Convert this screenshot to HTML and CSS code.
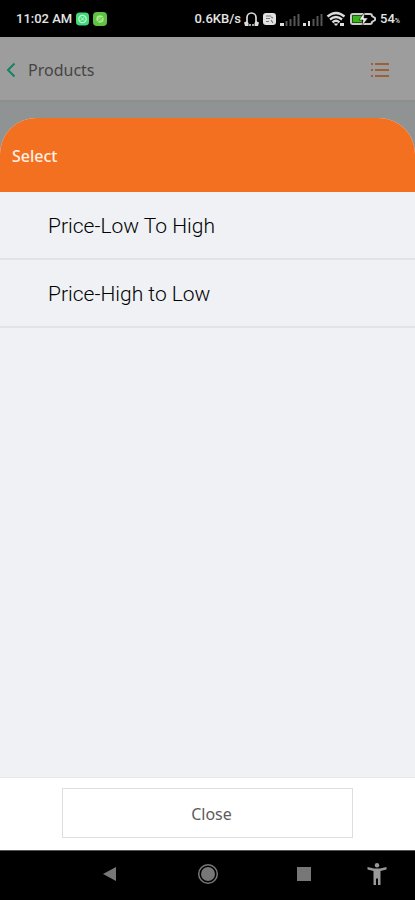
FILE: index.html
```html
<!DOCTYPE html>
<html lang="en">
<head>
<meta charset="utf-8">
<meta name="viewport" content="width=device-width, initial-scale=1">
<title>Products</title>
<link rel="stylesheet" href="styles.css">
</head>
<body>
<div class="status">
  <div class="status-group status-left">
    <span class="clock">11:02 AM</span>
    <svg width="13" height="14" viewBox="0 0 14 14"><rect width="14" height="14" rx="4" fill="#43d878"/><circle cx="7" cy="7" r="4" fill="none" stroke="#c4ffd6" stroke-width="1.3"/><path d="M5 5l4 4M9 5l-4 4" stroke="#c4ffd6"/></svg>
    <svg width="14" height="14" viewBox="0 0 14 14"><rect width="14" height="14" rx="4" fill="#5fc244"/><rect x="4" y="4" width="6" height="6" rx="2" fill="#8fdc70" stroke="#c3f3a8"/><path d="M4 10l6-5" stroke="#5fc244"/></svg>
  </div>
  <div class="status-group status-right">
    <span class="speed">0.6KB/s</span>
    <svg width="15" height="16" viewBox="0 0 15 16"><path d="M3 11.500V6.500a4.500 4.500 0 0 1 9 0v5" fill="none" stroke="#ddd" stroke-width="1.700"/><path d="M0 11.500l3-1.500 1.500 2v3H1zM15 11.500L12 10l-1.500 2v3H14z" fill="#ddd"/><circle cx="6" cy="14" r="1" fill="#ddd"/><circle cx="9" cy="14" r="1" fill="#ddd"/></svg>
    <svg width="15" height="14" viewBox="0 0 15 14"><rect x="1" y="1" width="13" height="12" rx="3" fill="#e2e2e2"/><path d="M4 4h5M4 6.500h4M4 9.500h3M9 5l2 1M9 8l2 3" stroke="#777" stroke-width="1.200"/></svg>
    <svg width="20" height="14" viewBox="0 0 20 14"><path d="M0 14v-3h4v3z" fill="#ddd"/><path d="M6.500 14V9M10.500 14V7M14.500 14V4M18.500 14V2" stroke="#555" stroke-width="2"/></svg>
    <svg width="20" height="14" viewBox="0 0 20 14"><path d="M0 14v-3h3v3zM5 9h2v5H5z" fill="#ddd"/><path d="M10.500 14V7M14.500 14V4M18.500 14V2" stroke="#555" stroke-width="2"/></svg>
    <svg width="20" height="16" viewBox="0 0 20 16"><path d="M1.500 5.500q8.500-7 17 0M4 8.500q6-5 12 0M6.500 11.300q3.500-3 7 0" fill="none" stroke="#ddd" stroke-width="2.300"/><path d="M7.500 12.500h5L10 15zM14 12h4v3h-4z" fill="#ddd"/></svg>
    <svg width="28" height="14" viewBox="0 0 28 14"><path d="M4 2h17q2 0 2 2l3 2v2l-3 2q0 2-2 2H4q-2 0-2-2V4q0-2 2-2z" fill="#000" stroke="#ccc" stroke-width="2"/><path d="M3.500 3.500H13v7H3.500z" fill="#3bb51d"/><path d="M15.500 0L10 8h4l-1 6 6-8h-4z" fill="#eee" stroke="#000" stroke-width=".5"/></svg>
    <span class="level">54<small>%</small></span>
  </div>
</div>
<header class="appbar">
  <button aria-label="Back"><svg width="10" height="16" viewBox="0 0 10 16"><path d="M8.500 1.500L2 8l6.500 6.500" fill="none" stroke="#168264" stroke-width="2"/></svg></button>
  <h1>Products</h1>
  <button class="menu" aria-label="Sort"><svg width="20" height="16" viewBox="0 0 20 16"><path d="M1 2h2M5 2h14M1 8h2M5 8h14M1 14h2M5 14h14" stroke="#9c5f38" stroke-width="2"/></svg></button>
</header>
<main class="sheet">
  <h2>Select</h2>
  <ul class="options">
    <li><button>Price-Low To High</button></li>
    <li><button>Price-High to Low</button></li>
  </ul>
  <footer><button class="close">Close</button></footer>
</main>
<nav class="system">
  <button aria-label="Back"><svg width="16" height="16" viewBox="0 0 16 16"><path d="M1 8L14 1v14z" fill="#777"/></svg></button>
  <button aria-label="Home"><svg width="22" height="22" viewBox="0 0 22 22"><circle cx="11" cy="11" r="9.300" fill="none" stroke="#777" stroke-width="1.500"/><circle cx="11" cy="11" r="7" fill="#777"/></svg></button>
  <button aria-label="Recent apps"><svg width="14" height="14" viewBox="0 0 14 14"><path d="M0 0h14v14H0z" fill="#777"/></svg></button>
  <button aria-label="Accessibility"><svg width="20" height="22" viewBox="0 0 20 22"><circle cx="10" cy="2.200" r="2.200" fill="#999"/><path d="M.5 4L7 5.500h6L19.500 4v2.500L13.500 8v14h-2.500v-6.500H9V22H6.500V8L.5 6.500z" fill="#999"/></svg></button>
</nav>
</body>
</html>
```
FILE: styles.css
```css
* { box-sizing: border-box; }
body {
  margin: 0;
  min-height: 100vh;
  display: flex;
  flex-direction: column;
  background: #909394;
  font-family: "Noto Sans", sans-serif;
}
button {
  border: 0;
  padding: 0;
  background: none;
  font: inherit;
  color: inherit;
}
svg { display: block; flex: none; }
h1, h2 { margin: 0; font-size: 16px; font-weight: 400; }

.status {
  height: 37px;
  padding: 0 15px 0 16px;
  display: flex;
  align-items: center;
  justify-content: space-between;
  background: #000;
  color: #e4e4e4;
  font: 500 13px Roboto, sans-serif;
}
.status-group { display: flex; align-items: center; }
.status-left { gap: 4px; }
.status-right { gap: 3px; }
.level small { font-size: 7px; }

.appbar {
  height: 65px;
  padding: 2px 25px 0 6px;
  display: flex;
  align-items: center;
  background: #9d9d9d;
  border-bottom: 2px solid #8c8f90;
}
.appbar h1 { margin-left: 12px; color: #454545; }
.menu { margin-left: auto; }

.sheet {
  flex: 1;
  margin-top: 16px;
  display: flex;
  flex-direction: column;
  background: #eff1f5;
  border-radius: 36px 36px 0 0;
  overflow: hidden;
}
.sheet h2 {
  height: 74px;
  padding: 2px 12px 0;
  display: flex;
  align-items: center;
  background: #f37021;
  color: #fff0e6;
  font-weight: 500;
}
.options { flex: 1; margin: 0; padding: 0; list-style: none; }
.options li { border-bottom: 2px solid #e1e3e6; }
.options button {
  width: 100%;
  height: 66px;
  padding: 2px 48px 0;
  text-align: left;
  color: #000;
  font: 300 21px Roboto, sans-serif;
}
footer {
  padding: 10px 62px 12px;
  background: #fff;
  border-top: 1px solid #e6e7e9;
}
.close {
  width: 100%;
  height: 50px;
  padding: 2px 0 0 8px;
  border: 1px solid #dedede;
  color: #5c5c5c;
  font-size: 16px;
}

.system {
  height: 50px;
  padding: 0 28px 3px 102px;
  display: grid;
  grid-template-columns: 95fr 100fr 70fr 20px;
  align-items: center;
  justify-items: start;
  background: #000;
  border-top: 1px solid #555;
}
```
